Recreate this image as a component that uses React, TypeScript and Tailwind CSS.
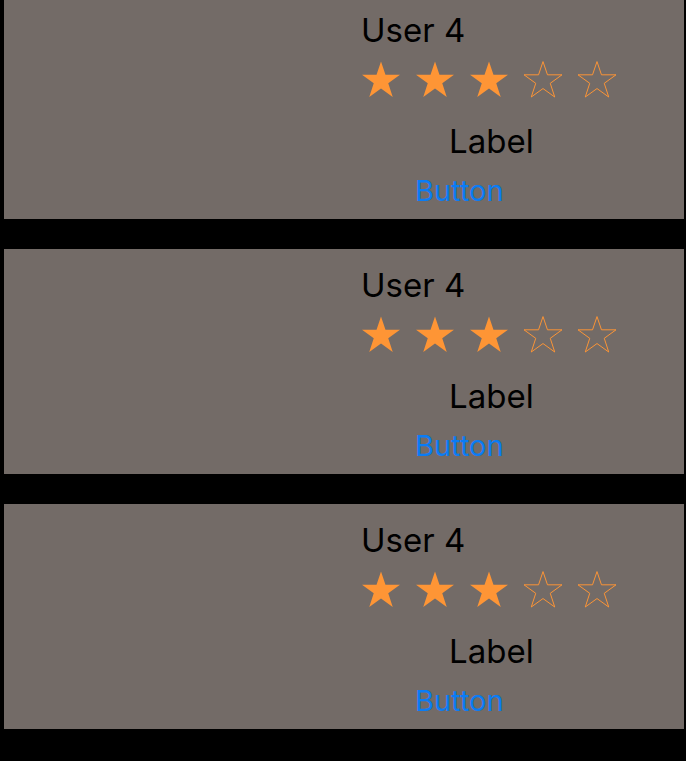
import React from 'react';

const STAR_POINTS =
  '20,0.6 24.6,14.2 39.5,14.2 27.45,22.9 32.05,37 20,28.3 7.95,37 12.55,22.9 0.5,14.2 15.4,14.2';

function Star({ filled }: { filled: boolean }) {
  return (
    <svg width="40" height="37" viewBox="0 0 40 38" className="block shrink-0">
      <polygon
        points={STAR_POINTS}
        fill={filled ? '#fe9535' : 'none'}
        stroke="#fe9535"
        strokeWidth={filled ? 0 : 1}
        strokeLinejoin="miter"
      />
    </svg>
  );
}

function UserCard({ name, rating }: { name: string; rating: number }) {
  return (
    <div className="h-[225px] w-[680px] shrink-0 bg-[#736b67] pl-[357px] pt-[16px] flex flex-col items-start">
      <p className="text-[33px] leading-[40px] text-black">{name}</p>
      <div className="mt-[11px] flex gap-[14px]">
        {[1, 2, 3, 4, 5].map((i) => (
          <Star key={i} filled={i <= rating} />
        ))}
      </div>
      <p className="mt-[23px] ml-[88px] text-[33px] leading-[40px] text-black">Label</p>
      <button className="mt-[13px] ml-[54px] text-[29px] leading-[34px] text-[#0a7cf5]">Button</button>
    </div>
  );
}

export default function App() {
  const users = [
    { id: 1, name: 'User 4', rating: 3 },
    { id: 2, name: 'User 4', rating: 3 },
    { id: 3, name: 'User 4', rating: 3 },
  ];

  return (
    <div className="bg-white w-[689px] h-[761px] overflow-hidden" style={{ fontFamily: 'Inter, "Noto Sans", sans-serif' }}>
      <div className="w-[686px] h-[761px] bg-black overflow-hidden">
        {/* lista desplazada unos px hacia arriba */}
        <div className="-mt-[6px] ml-[4px] flex flex-col gap-[30px]">
          {users.map((u) => (
            <UserCard key={u.id} name={u.name} rating={u.rating} />
          ))}
        </div>
      </div>
    </div>
  );
}
